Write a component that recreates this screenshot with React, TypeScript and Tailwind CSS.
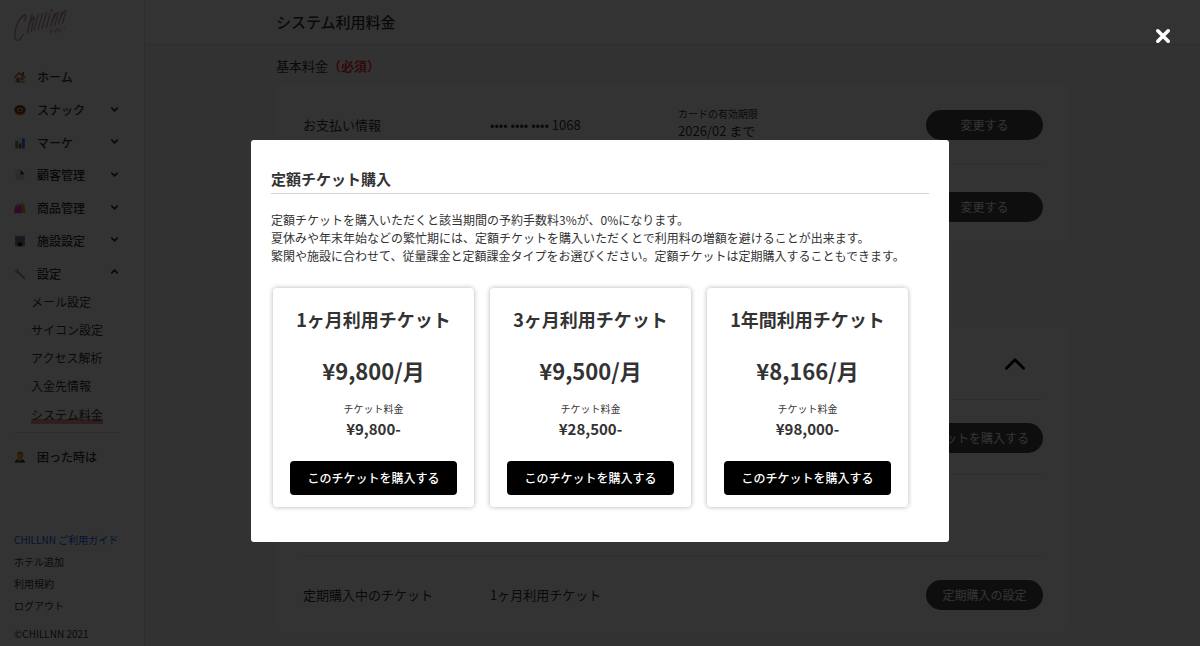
import React from 'react';
import { ChevronDown, ChevronUp } from 'lucide-react';

type MenuItem = {
  name: string;
  icon: React.ReactNode;
  state?: 'open' | 'closed';
};

const HomeIcon = () => (
  <svg viewBox="0 0 12 12" className="h-3 w-3">
    <rect x="1.5" y="5.5" width="9" height="5.5" fill="#f0d8a4" />
    <path d="M0 6 L5 1 L11.5 6 L10.5 7 L5 3 L1 7Z" fill="#c8452f" />
    <rect x="8" y="1" width="2" height="3" fill="#c8452f" />
    <rect x="2.5" y="7" width="2.5" height="4" fill="#9a5430" />
    <rect x="6" y="6.5" width="3.5" height="2.5" fill="#5d9fc0" />
    <rect x="0.5" y="10.5" width="11" height="1" fill="#8b8a5a" />
  </svg>
);

const DonutIcon = () => (
  <svg viewBox="0 0 12 12" className="h-3 w-3">
    <ellipse cx="6" cy="6.3" rx="6" ry="5.2" fill="#e08a4a" />
    <ellipse cx="6" cy="5.6" rx="5.3" ry="4.4" fill="#84391c" />
    <ellipse cx="6" cy="5.7" rx="2.8" ry="2" fill="#f0bd90" />
    <ellipse cx="6" cy="5.9" rx="1.5" ry="1" fill="#3a1c10" />
  </svg>
);

const ChartIcon = () => (
  <svg viewBox="0 0 12 12" className="h-3 w-3">
    <rect x="1" y="0.5" width="10" height="11" fill="#e3e8ee" />
    <rect x="1.3" y="4" width="2.6" height="7.5" fill="#1fb83c" />
    <rect x="4.7" y="6.5" width="2.6" height="5" fill="#e8261f" />
    <rect x="8.1" y="1.5" width="2.6" height="10" fill="#1e80e0" />
  </svg>
);

const PageIcon = () => (
  <svg viewBox="0 0 12 12" className="h-3 w-3">
    <path d="M1.5 0.5 H6.5 L10.5 5 V11.5 H1.5Z" fill="#dfe2e6" />
    <path d="M6.5 0.5 L10.5 5 L6.5 6Z" fill="#444" />
    <path d="M3 7.5 H9 M3 9.5 H9" stroke="#bbb" strokeWidth="0.6" />
  </svg>
);

const BagsIcon = () => (
  <svg viewBox="0 0 12 12" className="h-3 w-3">
    <path d="M6.5 3 V1.5 Q8 0 9.3 1.5 V3" stroke="#c98b2a" fill="none" strokeWidth="0.8" />
    <path d="M5 2.5 H10.5 L11.5 11 H5Z" fill="#e0a236" />
    <path d="M2.5 4.5 V3 Q4 1 5.5 3 V4.5" stroke="#a8248c" fill="none" strokeWidth="0.8" />
    <path d="M1 4 H7 L8 11.3 H0Z" fill="#f03bc5" />
  </svg>
);

const BuildingIcon = () => (
  <svg viewBox="0 0 12 12" className="h-3 w-3">
    <rect x="1" y="0.8" width="10" height="10.5" fill="#7f9cb8" />
    <path d="M1 3.5 H11 M1 6 H11 M1 8.5 H11 M3.5 1 V11 M6 1 V7 M8.5 1 V11" stroke="#5a6877" strokeWidth="0.6" />
    <rect x="4" y="7.5" width="4" height="3.8" fill="#15181c" />
  </svg>
);

const WrenchIcon = () => (
  <svg viewBox="0 0 12 12" className="h-3 w-3">
    <path d="M3.5 3.5 L10.5 10.5" stroke="#8ba6bd" strokeWidth="2" strokeLinecap="round" />
    <path d="M1 2.5 Q0.5 5 3.2 4.9 Q5 4.2 4.6 2.2 Q4 0.7 2.3 0.8 L3.2 2.5 L2.5 3.3Z" fill="#8ba6bd" />
  </svg>
);

const BowIcon = () => (
  <svg viewBox="0 0 12 12" className="h-3 w-3">
    <path d="M3 5 Q3 0.8 6.3 0.8 Q9.5 1 9.3 5 Q9 8 6.2 8.2 Q3.2 8 3 5Z" fill="#f0b01c" />
    <path d="M3 3.5 Q3.5 0.4 6.3 0.6 Q9 0.8 9.4 3.5 Q6 1.8 3 3.5Z" fill="#b57c16" />
    <path d="M0.8 11.5 Q1.5 8.3 4.5 8.3 L6.2 9.2 L8 8.3 Q10.5 8.5 11.2 11.5Z" fill="#2b2326" />
    <path d="M2.5 10 L5.8 8.8 L7.5 9.6 L4 11Z" fill="#c98f16" />
  </svg>
);

const Logo = () => (
  <svg viewBox="0 0 56 36" className="h-9 w-14" fill="none" stroke="#c99a9a" strokeLinecap="round" strokeLinejoin="round">
    <path d="M10.5 12 Q13.5 6.5 10.5 7 Q5 9.5 1.8 20 Q-0.8 31.5 3.5 32.4 Q6.5 32 9 26.5" strokeWidth="1.5" />
    <path d="M18 6.5 L13.3 24.5 M14.8 18 Q18.5 8.5 20.3 9 L17.3 23.3 M24.3 6.5 L20 22.6" strokeWidth="1.4" />
    <path d="M28.5 5.5 L24 21.5 M32.5 4.5 L28 20.5 M36 6 L32.3 19.5" strokeWidth="1.4" />
    <path d="M38 1.5 L37.4 3.5" strokeWidth="1.4" />
    <path d="M40.6 5 L36.7 18.5 M38.4 13 Q43 3.5 44.3 4.5 L40.8 17.3" strokeWidth="1.3" />
    <path d="M48 3.5 L44.3 16.3 M45.6 11 Q50.8 1.5 52 3 L48.6 15" strokeWidth="1.3" />
    <path d="M37.5 21 L36 26 M37 23.5 H39.5 M42.5 20 L41 25 M41.5 22.5 L45 20.5 L44 24 M48 19.5 Q45.5 21 47 23.5 M50 20 L52 22" strokeWidth="0.8" />
  </svg>
);

const menuItems: MenuItem[] = [
  { name: 'ホーム', icon: <HomeIcon /> },
  { name: 'スナック', icon: <DonutIcon />, state: 'closed' },
  { name: 'マーケ', icon: <ChartIcon />, state: 'closed' },
  { name: '顧客管理', icon: <PageIcon />, state: 'closed' },
  { name: '商品管理', icon: <BagsIcon />, state: 'closed' },
  { name: '施設設定', icon: <BuildingIcon />, state: 'closed' },
  { name: '設定', icon: <WrenchIcon />, state: 'open' },
];

const subItems = ['メール設定', 'サイコン設定', 'アクセス解析', '入金先情報', 'システム料金'];

const footerLinks = ['ホテル追加', '利用規約', 'ログアウト'];

const tickets = [
  { name: '1ヶ月利用チケット', monthly: '¥9,800/月', total: '¥9,800-' },
  { name: '3ヶ月利用チケット', monthly: '¥9,500/月', total: '¥28,500-' },
  { name: '1年間利用チケット', monthly: '¥8,166/月', total: '¥98,000-' },
];

function Sidebar() {
  return (
    <aside className="flex w-[145px] shrink-0 flex-col border-r border-gray-200 bg-white pl-3.5 pt-2 pb-1">
      <Logo />
      <nav className="mt-[17px] pr-6 text-xs font-medium">
        <div className="grid h-[229px] grid-rows-7">
          {menuItems.map((item) => (
            <a key={item.name} href="#" className="flex items-center">
              {item.icon}
              <span className="ml-[11px] flex-1">{item.name}</span>
              {item.state === 'closed' && <ChevronDown size={11} strokeWidth={4} className="mb-0.5" />}
              {item.state === 'open' && <ChevronUp size={11} strokeWidth={4} className="mb-1" />}
            </a>
          ))}
        </div>
        <div className="flex flex-col items-start gap-2.5 border-b border-gray-200 pb-2 pl-[17px] pt-[3px] font-normal">
          {subItems.map((name, i) => (
            <a
              key={name}
              href="#"
              className={
                i === subItems.length - 1
                  ? 'bg-[linear-gradient(transparent_75%,#e89a9a_75%)] leading-[19px]'
                  : 'leading-[18px]'
              }
            >
              {name}
            </a>
          ))}
        </div>
        <a href="#" className="mt-2 flex h-8 items-center">
          <BowIcon />
          <span className="ml-[11px]">困った時は</span>
        </a>
      </nav>
      <div className="mt-auto flex flex-col gap-1.5 text-[10px] leading-4">
        <a href="#" className="text-blue-600">CHILLNN ご利用ガイド</a>
        {footerLinks.map((name) => (
          <a key={name} href="#">{name}</a>
        ))}
        <small className="mt-1.5 text-[10px]">©CHILLNN 2021</small>
      </div>
    </aside>
  );
}

function PillButton({ children }: { children: React.ReactNode }) {
  return (
    <button className="h-[30px] min-w-[117px] rounded-full bg-[#484848] px-3.5 text-xs text-white">
      {children}
    </button>
  );
}

function Background() {
  return (
    <div className="flex h-screen overflow-hidden bg-[#fafafa] text-[#333]">
      <Sidebar />
      <main className="flex-1">
        <header className="border-b border-gray-200 bg-white">
          <h1 className="mx-auto h-11 max-w-[793px] text-[15px] font-medium leading-[44px]">システム利用料金</h1>
        </header>
        <div className="mx-auto max-w-[793px] text-[13px]">
          <h2 className="pt-[11px] leading-5">
            基本料金<span className="font-bold text-red-500">（必須）</span>
          </h2>
          <section className="mt-2 rounded-lg bg-white pl-[27px] pr-[26px]">
            <div className="flex h-[81px] items-center border-b border-gray-200 pt-0.5">
              <span className="w-[187px]">お支払い情報</span>
              <span className="w-[188px]">•••• •••• •••• 1068</span>
              <span className="flex-1 pb-1 leading-[18px]">
                <span className="block text-[10px] leading-4">カードの有効期限</span>
                2026/02 まで
              </span>
              <PillButton>変更する</PillButton>
            </div>
            <div className="flex h-20 items-center justify-end pt-1">
              <PillButton>変更する</PillButton>
            </div>
          </section>
          <section className="mt-20 rounded-lg bg-white pl-[27px] pr-[26px]">
            <div className="flex h-[75px] items-center justify-end border-b border-gray-200 pr-[11px] pt-1 text-black">
              <ChevronUp size={34} />
            </div>
            <div className="flex h-[75px] items-center justify-end border-b border-gray-200 pt-0.5">
              <PillButton>チケットを購入する</PillButton>
            </div>
            <div className="h-[82px] border-b border-gray-200" />
            <div className="flex h-[75px] items-center">
              <span className="w-[187px]">定期購入中のチケット</span>
              <span className="flex-1">1ヶ月利用チケット</span>
              <PillButton>定期購入の設定</PillButton>
            </div>
          </section>
        </div>
      </main>
    </div>
  );
}

function TicketModal() {
  return (
    <div className="fixed inset-0 bg-black/80 pt-[140px]">
      <button aria-label="閉じる" className="absolute right-[29px] top-7 text-white">
        <svg viewBox="0 0 16 16" className="h-4 w-4" stroke="currentColor" strokeWidth="3.6" strokeLinecap="round">
          <path d="M2.8 2.8 L13.2 13.2 M13.2 2.8 L2.8 13.2" />
        </svg>
      </button>
      <div role="dialog" aria-labelledby="ticket-title" className="mx-auto w-full max-w-[698px] rounded-[3px] bg-white px-5 pb-[35px] pt-[27px] text-[#333]">
        <h2 id="ticket-title" className="border-b border-gray-300 pb-[3px] text-[15px] font-bold leading-[23px]">
          定額チケット購入
        </h2>
        <p className="mt-[17px] text-xs leading-[18px]">
          定額チケットを購入いただくと該当期間の予約手数料3%が、0%になります。
          <br />
          夏休みや年末年始などの繁忙期には、定額チケットを購入いただくとで利用料の増額を避けることが出来ます。
          <br />
          繁閑や施設に合わせて、従量課金と定額課金タイプをお選びください。定額チケットは定期購入することもできます。
        </p>
        <div className="mx-0.5 mt-[23px] flex gap-4">
          {tickets.map((ticket) => (
            <div
              key={ticket.name}
              className="flex w-[201px] flex-col rounded bg-white px-[17px] pb-3 pt-[17px] text-center shadow-[0_0_5px_rgba(0,0,0,0.3)]"
            >
              <h3 className="whitespace-nowrap text-lg font-bold leading-7">{ticket.name}</h3>
              <p className="mt-5 text-[22px] font-bold leading-[34px]">{ticket.monthly}</p>
              <p className="mt-3.5 text-[10px] leading-4">チケット料金</p>
              <p className="text-[15px] font-bold leading-6">{ticket.total}</p>
              <button className="mt-5 h-[34px] rounded bg-black text-xs font-medium text-white">
                このチケットを購入する
              </button>
            </div>
          ))}
        </div>
      </div>
    </div>
  );
}

export default function App() {
  return (
    <div className="font-['Noto_Sans_CJK_JP',sans-serif]">
      <Background />
      <TicketModal />
    </div>
  );
}
